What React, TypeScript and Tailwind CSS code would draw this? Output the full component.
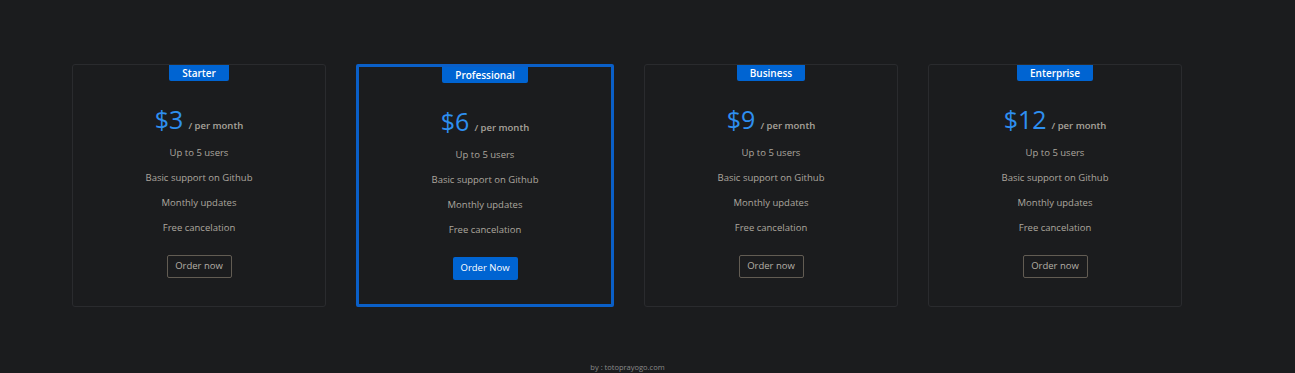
import React from "react";

type Plan = {
  name: string;
  price: string;
  featured?: boolean;
  shift?: boolean;
};

const plans: Plan[] = [
  { name: "Starter", price: "$3" },
  { name: "Professional", price: "$6", featured: true },
  { name: "Business", price: "$9" },
  { name: "Enterprise", price: "$12", shift: true },
];

const features = [
  "Up to 5 users",
  "Basic support on Github",
  "Monthly updates",
  "Free cancelation",
];

function PlanCard({ plan }: { plan: Plan }) {
  return (
    <div
      className={
        plan.featured
          ? "flex w-[258px] h-[243px] flex-col items-center rounded-[2px] border-[3px] border-[#0a5fc8] -mx-[2px]"
          : plan.shift
            ? "flex w-[254px] h-[243px] flex-col items-center rounded-[3px] border border-[#2a2b2e] -ml-[2px]"
            : "flex w-[254px] h-[243px] flex-col items-center rounded-[3px] border border-[#2a2b2e]"
      }
    >
      <div className="flex h-[16px] items-center rounded-b-[2px] bg-[#0064d2] px-[13px] text-[10px] font-semibold text-white">
        {plan.name}
      </div>
      <div className="mt-[22px] flex items-baseline gap-[5px]">
        <span className="text-[25px] leading-[32px] text-[#2e8ff0]">{plan.price}</span>
        <span className="text-[9.5px] font-semibold text-[#a8a39b]">/ per month</span>
      </div>
      <ul className="mt-[11px] flex flex-col items-center gap-[11px] text-[9.5px] leading-[14px] text-[#aca79e]">
        {features.map((f) => (
          <li key={f}>{f}</li>
        ))}
      </ul>
      {plan.featured ? (
        <button className="mt-[20px] h-[23px] w-[65px] rounded-[2px] bg-[#0064d2] text-[9.5px] text-white">
          Order Now
        </button>
      ) : (
        <button className="mt-[20px] h-[23px] w-[65px] rounded-[2px] border border-[#625c53] text-[9.5px] text-[#b4afa6]">
          Order now
        </button>
      )}
    </div>
  );
}

export default function App() {
  return (
    <div
      className="flex h-[373px] w-full flex-col bg-[#1b1c1e]"
      style={{ fontFamily: '"Open Sans", "Noto Sans", sans-serif' }}
    >
      <div className="flex gap-[32px] pl-[72px] pt-[64px]">
        {plans.map((p) => (
          <PlanCard key={p.name} plan={p} />
        ))}
      </div>
      <div className="mt-auto pb-[1px] pr-[40px] text-center text-[7.5px] leading-[10px] text-[#8a8a8a]">
        by : totoprayogo.com
      </div>
    </div>
  );
}
